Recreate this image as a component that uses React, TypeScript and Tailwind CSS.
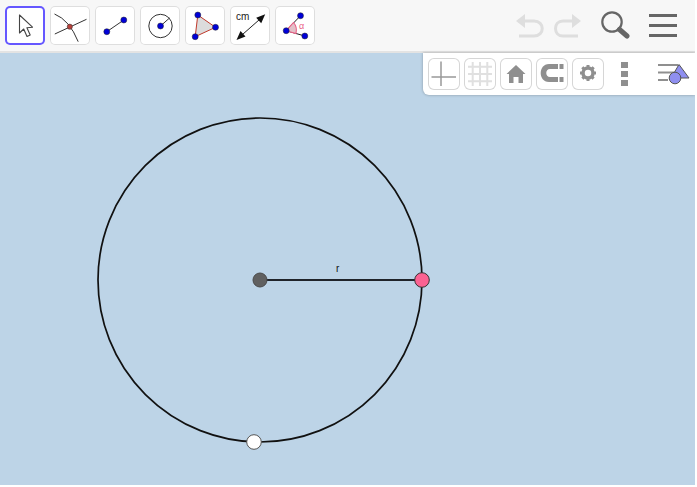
import React from "react";

const BLUE = "#0000d8";
const RED = "#c0392b";

const ToolButton = ({ active = false, children }: { active?: boolean; children: React.ReactNode }) => (
  <button
    className={
      active
        ? "h-[39px] w-10 shrink-0 rounded-[5px] bg-white ring-2 ring-[#6557ff] ring-inset"
        : "h-[39px] w-10 shrink-0 rounded-[5px] bg-white ring-1 ring-[#dedede] ring-inset"
    }
  >
    <svg viewBox="0 0 39 39" className="block h-full w-full">
      {children}
    </svg>
  </button>
);

const PanelButton = ({ children }: { children: React.ReactNode }) => (
  <button className="h-8 w-8 shrink-0 rounded-[6px] bg-white ring-1 ring-[#d6d6d6] ring-inset">
    <svg viewBox="0 0 32 32" className="block h-full w-full">
      {children}
    </svg>
  </button>
);

const Dot = ({ x, y, r = 3 }: { x: number; y: number; r?: number }) => (
  <circle cx={x} cy={y} r={r} fill={BLUE} stroke="#222" strokeWidth="0.5" />
);

const Toolbar = () => (
  <div className="flex h-[53px] shrink-0 items-start justify-between border-b-2 border-[#e3e3e3] bg-[#f7f7f7] pt-[6px] pl-[5px]">
    <div className="flex gap-[5px]">
      <ToolButton active>
        <path d="M14 9v18l4.200-4 3.300 7.500 3.200-1.500-3.300-7.200 5.600-.6z" fill="#fff" stroke="#444" strokeWidth="1.100" strokeLinejoin="round" />
      </ToolButton>
      <ToolButton>
        <path d="M4 8Q19 14 27.700 35.700" fill="none" stroke="#333" strokeWidth="1" />
        <path d="M4.300 28L36 13.300" stroke="#333" strokeWidth="1" />
        <circle cx="19.300" cy="20.700" r="2.600" fill="#b5403a" stroke="#333" strokeWidth="0.500" />
      </ToolButton>
      <ToolButton>
        <path d="M11.300 25.700L28.300 14" stroke="#333" strokeWidth="1" />
        <Dot x={11.300} y={25.700} />
        <Dot x={28.300} y={14} />
      </ToolButton>
      <ToolButton>
        <circle cx="20" cy="20" r="11.700" fill="none" stroke="#333" strokeWidth="1" />
        <path d="M20 20L29 12" stroke="#333" strokeWidth="1" />
        <Dot x={20} y={20} />
      </ToolButton>
      <ToolButton>
        <path d="M12.300 9L30 21.300 9.700 30.700z" fill="#dcdcdc" stroke={RED} strokeWidth="1" />
        <Dot x={12.300} y={9} />
        <Dot x={30} y={21.300} />
        <Dot x={9.700} y={30.700} />
      </ToolButton>
      <ToolButton>
        <text x="5.500" y="14" fontSize="10" fill="#222" style={{ fontFamily: '"Liberation Sans", sans-serif' }}>
          cm
        </text>
        <path d="M8 32L33 10" stroke="#222" strokeWidth="1" />
        <path d="M6 34l4-9 5 5.500zM34.700 8.300l-4 9-5-5.500z" fill="#111" />
      </ToolButton>
      <ToolButton>
        <path d="M10.700 24.700L25 9.700M10.700 24.700L29.300 30" stroke="#222" strokeWidth="1" />
        <path d="M10.700 24.700L18 16.500Q22 21 20.500 27.500z" fill="#e3c0c8" stroke="#ea5f86" strokeWidth="1.100" />
        <text x="23.500" y="23" fontSize="9" fill="#ea5f86" style={{ fontFamily: '"Liberation Sans", sans-serif' }}>
          α
        </text>
        <Dot x={10.700} y={24.700} />
        <Dot x={25} y={9.700} />
        <Dot x={29.300} y={30} />
      </ToolButton>
    </div>
    <div className="mt-[5px] flex items-center">
      <svg width="65" height="26" viewBox="0 0 65 26" className="mr-[20px]" fill="none" stroke="#dedede" strokeWidth="3">
        <path d="M7 8H18C29 8 29 23 18 23H3" />
        <path d="M0 8L9 1V15z" fill="#dedede" stroke="none" />
        <path d="M57 8H47C37 8 37 23 47 23H62" />
        <path d="M65 8L56 1V15z" fill="#dedede" stroke="none" />
      </svg>
      <svg width="29" height="29" viewBox="0 0 29 29" className="mr-[19px]" fill="none">
        <circle cx="11" cy="11" r="9.700" stroke="#666" strokeWidth="2.200" />
        <path d="M18.500 18.500L26 25" stroke="#666" strokeWidth="5" strokeLinecap="round" />
      </svg>
      <div className="mr-[18px] flex h-[23px] w-[28px] flex-col justify-between">
        <div className="h-[3px] bg-[#666]" />
        <div className="h-[3px] bg-[#666]" />
        <div className="h-[3px] bg-[#666]" />
      </div>
    </div>
  </div>
);

const StylePanel = () => (
  <div className="absolute top-0 right-0 flex h-[42px] w-[272px] items-center gap-1 rounded-bl-[6px] bg-white pl-[5px] shadow-[0_0_3px_rgba(0,0,0,0.3)]">
    <PanelButton>
      <path d="M3.500 19H28M13 3.500V28" stroke="#999" strokeWidth="1.500" />
    </PanelButton>
    <PanelButton>
      <path d="M4 8.700H28M4 16H28M4 23.300H28M8.700 4V28M16 4V28M23.300 4V28" stroke="#e0e0e0" strokeWidth="2" />
    </PanelButton>
    <PanelButton>
      <path d="M16 7L25.500 16H23V25H18.500V19H13.500V25H9V16H6.500z" fill="#8f8f8f" />
    </PanelButton>
    <PanelButton>
      <path d="M22 6H13C2 6 2 24 13 24H22V19H14C9 19 9 11 14 11H22z" fill="#8f8f8f" />
      <path d="M23.500 6H27.500V11H23.500zM23.500 19H27.500V24H23.500z" fill="#8f8f8f" />
    </PanelButton>
    <PanelButton>
      <g transform="translate(0 -1)">
        <circle cx="16" cy="16" r="5" fill="none" stroke="#8f8f8f" strokeWidth="3.500" />
        <path d="M16 8V24M8 16H24M10.300 10.300L21.700 21.700M21.700 10.300L10.300 21.700" stroke="#8f8f8f" strokeWidth="3" strokeDasharray="3 10" />
      </g>
    </PanelButton>
    <div className="ml-[13px] flex h-6 w-[7px] shrink-0 flex-col justify-between">
      <div className="h-[6px] bg-[#8f8f8f]" />
      <div className="h-[6px] bg-[#8f8f8f]" />
      <div className="h-[6px] bg-[#8f8f8f]" />
    </div>
    <svg width="32" height="22" viewBox="0 0 32 22" className="ml-[26px] shrink-0">
      <path d="M0 2H20M0 9.500H16M0 17H10" stroke="#8f8f8f" strokeWidth="2" />
      <path d="M21 1.500L31 15H13z" fill="#8f8ff0" stroke="#555" strokeWidth="1" />
      <circle cx="17" cy="15" r="5.800" fill="#8f8ff0" stroke="#555" strokeWidth="1" />
    </svg>
  </div>
);

const Construction = () => (
  <svg width="695" height="432" viewBox="0 53 695 432" className="absolute inset-0">
    <circle cx="260" cy="280" r="162" fill="none" stroke="#111" strokeWidth="1.700" />
    <path d="M260 280H422" stroke="#1f232a" strokeWidth="2" />
    <text x="336" y="272" fontSize="10" fill="#111" style={{ fontFamily: '"Liberation Sans", sans-serif' }}>
      r
    </text>
    <circle cx="260" cy="280" r="7" fill="#606060" stroke="#4a4a4a" strokeWidth="1" />
    <circle cx="422" cy="280" r="7.300" fill="#fb6292" stroke="#333" strokeWidth="1" />
    <circle cx="254" cy="442" r="7.300" fill="#ffffff" stroke="#555" strokeWidth="1" />
  </svg>
);

export default function App() {
  return (
    <div className="h-[487px] w-[697px] overflow-hidden bg-white">
      <div className="flex h-[485px] w-[695px] flex-col overflow-hidden bg-[#bdd4e7]">
        <Toolbar />
        <div className="relative flex-1">
          <Construction />
          <StylePanel />
        </div>
      </div>
    </div>
  );
}
